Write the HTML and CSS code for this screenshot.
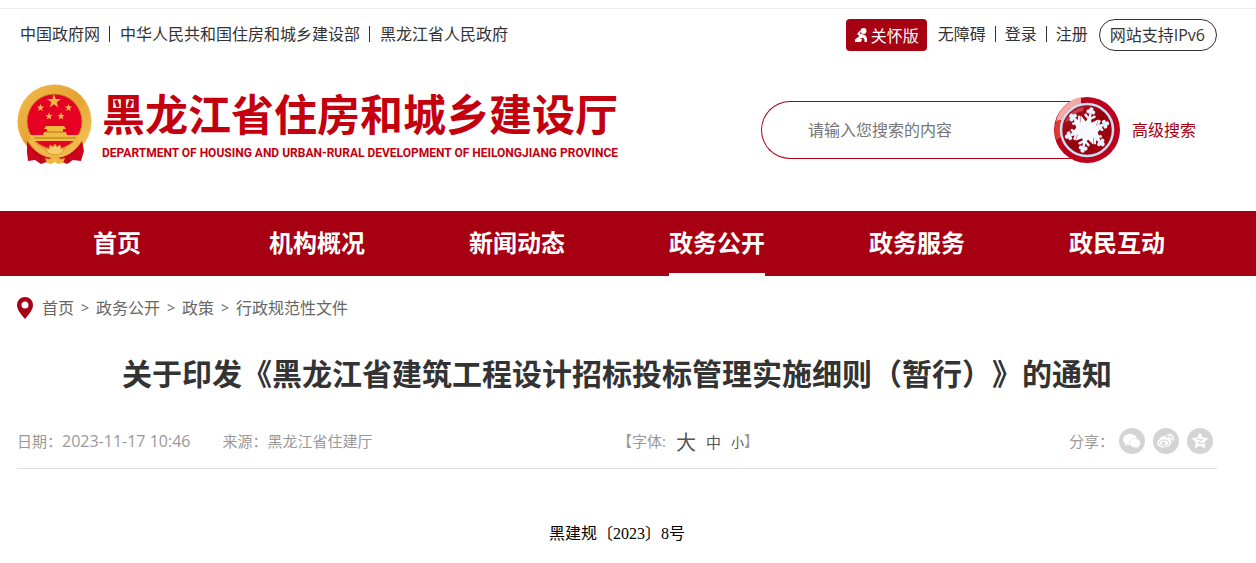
FILE: index.html
```html
<!DOCTYPE html>
<html lang="zh-CN">
<head>
    <meta charset="UTF-8">
    <meta name="viewport" content="width=device-width, initial-scale=1.0">
    <title>黑龙江省住房和城乡建设厅</title>
    <link rel="stylesheet" href="styles.css">
</head>
<body>
    <div class="strip"></div>

    <div class="topbar wrap">
        <div class="links sites">
            <a href="#">中国政府网</a>
            <a href="#">中华人民共和国住房和城乡建设部</a>
            <a href="#">黑龙江省人民政府</a>
        </div>
        <div class="tools">
            <button class="care" type="button">
                <svg width="14" height="16" viewBox="0 0 14 16" fill="#fff" aria-hidden="true">
                    <circle cx="9.500" cy="4" r="3"/>
                    <path d="M6 3.500 3 7l2.500 2L1 12.500V15h5.500l2-2.500L6 12l3-1.500 1.500 2V15H13v-4l-2-3-4-1-1.500-.8L7 4.500z"/>
                </svg>
                关怀版
            </button>
            <div class="links">
                <a href="#">无障碍</a>
                <a href="#">登录</a>
                <a href="#">注册</a>
            </div>
            <a class="ipv6" href="#">网站支持IPv6</a>
        </div>
    </div>

    <header class="header wrap">
        <a class="logo" href="#">
            <svg class="emblem" width="76" height="82" viewBox="0 0 76 82" aria-hidden="true">
                <defs>
                    <linearGradient id="gold" x1="0" y1="0" x2="1" y2="1">
                        <stop offset="0" stop-color="#f3bd4e"/>
                        <stop offset=".5" stop-color="#e5a432"/>
                        <stop offset="1" stop-color="#f8ce68"/>
                    </linearGradient>
                </defs>
                <circle cx="37.500" cy="37.500" r="37" fill="url(#gold)"/>
                <circle cx="37.500" cy="37.500" r="32.500" fill="none" stroke="#d89427" stroke-width="5" stroke-dasharray="1 2" opacity=".2"/>
                <circle cx="37.500" cy="37.500" r="27.500" fill="#e60023" stroke="#c98a24"/>
                <g fill="#f1bb43">
                    <path d="m37 10 1.700 5h5.300l-4.300 3.200 1.600 5.300-4.300-3.200-4.300 3.200 1.600-5.300-4.300-3.200h5.300z"/>
                    <path d="m23.500 20 1 2.500h2.700l-2.200 1.700.8 2.800-2.300-1.600-2.300 1.600.8-2.800-2.200-1.700h2.700z"/>
                    <path d="m51.500 20 1 2.500h2.700l-2.200 1.700.8 2.800-2.300-1.600-2.300 1.600.8-2.800-2.200-1.700h2.700z"/>
                    <path d="m32 28.500 1 2.500h2.700l-2.200 1.700.8 2.800-2.300-1.600-2.300 1.600.8-2.800-2.200-1.700h2.700z"/>
                    <path d="m44 28.500 1 2.500h2.700l-2.200 1.700.8 2.800-2.300-1.600-2.300 1.600.8-2.800-2.200-1.700h2.700z"/>
                    <path d="M29 42h18l2 3H27zM30 45h16v3h3l1 3h12l-3 6H16l-4-6h14l1-3h3z"/>
                </g>
                <path d="M29 48h19M17 54h42" stroke="#b87915"/>
                <path d="M10 57q11 17 27.500 17T65 57l2 10-3 10-8-1-6 4-12-5-14 5-6-4-7 1-1-8z" fill="#ce061c"/>
                <path d="M13 55q9 15 25 16 15-1 25-16" fill="none" stroke="#f0b94a" stroke-width="4"/>
                <path d="m31 69-3-5 4 1 1-4 3 2 2-3 2 3 3-2 1 4 4-1-3 5q-7 4-14 0z" fill="#f6cb68" stroke="#d4962a"/>
                <path d="m28 74 4 1 6-3 6 3 4-1-2 5-5 1-3-2-4 2-4-1z" fill="#edb63f"/>
                <path d="m14 65 10 8-1 6M61 65l-10 8 1 6" fill="none" stroke="#a90015"/>
            </svg>
            <span class="logo-text">
                <span class="logo-cn">黑龙江省住房和城乡建设厅</span>
                <span class="logo-en">DEPARTMENT OF HOUSING AND URBAN-RURAL DEVELOPMENT OF HEILONGJIANG PROVINCE</span>
            </span>
        </a>
        <form class="search">
            <input type="text" placeholder="请输入您搜索的内容" aria-label="请输入您搜索的内容">
            <button type="button" aria-label="搜索">
                <svg width="66" height="68" viewBox="0 0 66 68" aria-hidden="true">
                    <defs>
                        <linearGradient id="disc" x1="0" y1="0" x2="1" y2="1">
                            <stop offset="0" stop-color="#b51625"/>
                            <stop offset=".5" stop-color="#91000b"/>
                            <stop offset="1" stop-color="#a80010"/>
                        </linearGradient>
                        <g id="arm">
                            <path d="M33 34V15M33 23l-4-3M33 23l4-3" fill="none" stroke="#e5f2ff" stroke-width="2.500" stroke-linecap="round"/>
                            <circle cx="33" cy="13" r="2.200"/>
                            <circle cx="30.500" cy="15.500" r="2"/>
                            <circle cx="35.500" cy="15.500" r="2"/>
                            <circle cx="28.500" cy="19.500" r="1.300"/>
                            <circle cx="37.500" cy="19.500" r="1.300"/>
                        </g>
                    </defs>
                    <circle cx="33" cy="34" r="33" fill="#bd001b"/>
                    <path d="M2 25A33 33 0 0 1 27 1v7A27 27 0 0 0 8 24z" fill="#f2aaa2"/>
                    <path d="M2 25A33 33 0 0 0 2 44l7-4a27 27 0 0 1-1-16z" fill="#dc3b30"/>
                    <circle cx="33" cy="34" r="26" fill="url(#disc)" stroke="#c9dff7" stroke-width="2.500"/>
                    <path d="M11 26Q18 12 30 11l-1 4q-9 1-14 10z" fill="#d7686c" opacity=".6"/>
                    <g fill="#e5f2ff" transform="rotate(12 33 34)">
                        <use href="#arm"/>
                        <use href="#arm" transform="rotate(60 33 34)"/>
                        <use href="#arm" transform="rotate(120 33 34)"/>
                        <use href="#arm" transform="rotate(180 33 34)"/>
                        <use href="#arm" transform="rotate(240 33 34)"/>
                        <use href="#arm" transform="rotate(300 33 34)"/>
                        <path d="m33 19 3 7 6-5-1 7 7-1-4 7 4 7-7-1 1 7-6-4-3 6-3-6-6 4 1-7-7 1 4-7-4-7 7 1-1-7 6 5z" fill="#f7fbff"/>
                    </g>
                </svg>
            </button>
            <a href="#">高级搜索</a>
        </form>
    </header>

    <nav class="nav">
        <div class="nav-list wrap">
            <a href="#">首页</a>
            <a href="#">机构概况</a>
            <a href="#">新闻动态</a>
            <a class="active" href="#">政务公开</a>
            <a href="#">政务服务</a>
            <a href="#">政民互动</a>
        </div>
    </nav>

    <main class="wrap">
        <div class="crumbs">
            <svg width="16" height="22" viewBox="0 0 16 22" aria-hidden="true">
                <path d="M8 0a8 8 0 0 0-8 8c0 5 4 9 8 14 4-5 8-9 8-14a8 8 0 0 0-8-8zm0 4.500a3.500 3.500 0 1 1 0 7 3.500 3.500 0 0 1 0-7z" fill="#a60012"/>
            </svg>
            <a href="#">首页</a>
            <span>&gt;</span>
            <a href="#">政务公开</a>
            <span>&gt;</span>
            <a href="#">政策</a>
            <span>&gt;</span>
            <a href="#">行政规范性文件</a>
        </div>

        <h1>关于印发《黑龙江省建筑工程设计招标投标管理实施细则（暂行）》的通知</h1>

        <div class="meta">
            <div class="info">
                <span>日期：<time>2023-11-17 10:46</time></span>
                <span>来源：黑龙江省住建厅</span>
            </div>
            <div class="sizes">
                <span>【字体:</span>
                <button class="big" type="button">大</button>
                <button class="mid" type="button">中</button>
                <button class="small" type="button">小</button>
                <span>】</span>
            </div>
            <div class="share">
                <span>分享：</span>
                <a href="#" aria-label="微信">
                    <svg width="26" height="26" viewBox="0 0 26 26">
                        <circle cx="13" cy="13" r="13" fill="#d4d4d4"/>
                        <path d="M11 6c-4 0-7 2.400-7 5.500 0 1.800 1 3.200 2.500 4.200L6 18l2.700-1.300q1.500.4 3 .3c-1-4 2-7 6.200-7C17 7.500 14.300 6 11 6z" fill="#fff"/>
                        <path d="M16 10.500c-3.300 0-5.500 2-5.500 4.500s2.400 4.500 5.500 4.500l1.700-.2L20 20.500l-.5-2c1.300-.9 2-2.100 2-3.500 0-2.500-2.400-4.500-5.500-4.500z" fill="#fff" stroke="#d4d4d4" stroke-width=".4"/>
                    </svg>
                </a>
                <a href="#" aria-label="微博">
                    <svg width="26" height="26" viewBox="0 0 26 26">
                        <circle cx="13" cy="13" r="13" fill="#d4d4d4"/>
                        <path d="M11 8c1.600-.5 2.500.4 2 2 2.400-.8 4.300-.2 3.600 1.800 1.500.4 2 1.500 1.600 3-.7 2.800-4 4.700-7.700 4.700-3.600 0-6.300-1.700-6.300-4.300C4.200 12.500 7.700 8.800 11 8z" fill="#fff"/>
                        <ellipse cx="11" cy="15" rx="4.600" ry="3" fill="none" stroke="#d4d4d4"/>
                        <circle cx="10.500" cy="15.300" r="1.600" fill="#d4d4d4"/>
                        <path d="M14.500 7c4-1.200 6.500 1.500 5.500 5M15.500 9.500q2.700-.4 2.200 2" fill="none" stroke="#fff" stroke-width="1.500" stroke-linecap="round"/>
                    </svg>
                </a>
                <a href="#" aria-label="QQ空间">
                    <svg width="26" height="26" viewBox="0 0 26 26">
                        <circle cx="13" cy="13" r="13" fill="#d4d4d4"/>
                        <path d="m13 5 2.300 5 5.400.6-4 3.800 1.100 5.400-4.800-2.700-4.800 2.700 1.100-5.400-4-3.800 5.400-.6z" fill="#fff" stroke="#fff" stroke-linejoin="round"/>
                        <path d="M10 11.500q3-.8 5.500 0l-4.500 3.700q3 .8 6 0" fill="none" stroke="#d4d4d4"/>
                    </svg>
                </a>
            </div>
        </div>

        <p class="doc-no">黑建规〔2023〕8号</p>
    </main>
</body>
</html>
```

FILE: styles.css
```css
* {
    box-sizing: border-box;
}

body {
    margin: 0;
    background-color: #fff;
    color: #333;
    font-family: "Open Sans", "Noto Sans CJK SC", sans-serif;
    font-size: 16px;
    line-height: 32px;
    text-spacing-trim: space-all;
}

a {
    color: inherit;
    text-decoration: none;
}

button {
    padding: 0;
    border: none;
    background: none;
    color: inherit;
    font-family: inherit;
    cursor: pointer;
}

svg {
    display: block;
    flex: none;
}

.wrap {
    margin: 0 39px 0 17px;
}

.strip {
    height: 9px;
    border-bottom: 1px solid #eee;
}

/* 顶部链接 */
.topbar {
    display: flex;
    justify-content: space-between;
    padding: 10px 0 0 3px;
    line-height: 30px;
    white-space: nowrap;
}

.links {
    display: flex;
}

.links a + a::before {
    content: "";
    display: inline-block;
    width: 1px;
    height: 16px;
    margin: 0 9px;
    background-color: #333;
    vertical-align: -2px;
}

.sites a + a::before {
    margin-right: 10px;
}

.tools {
    display: flex;
    gap: 11px;
}

.care {
    display: flex;
    align-items: center;
    gap: 3px;
    height: 32px;
    padding: 0 8px;
    border-radius: 4px;
    background-color: #a60012;
    color: #fff;
    font-size: 16px;
}

.ipv6 {
    padding: 0 11px 0 10px;
    border: 1px solid #333;
    border-radius: 16px;
}

/* 标志和搜索 */
.header {
    display: flex;
    justify-content: space-between;
    align-items: flex-start;
    height: 160px;
    padding-top: 33px;
}

.logo {
    display: flex;
    gap: 9px;
    color: #c4000f;
    font-weight: bold;
    white-space: nowrap;
}

.logo-text {
    display: flex;
    flex-direction: column;
}

.logo-cn {
    font-size: 43px;
    line-height: 62px;
}

.logo-en {
    font-family: Roboto, sans-serif;
    font-size: 12px;
    line-height: 14px;
}

.search {
    display: flex;
    align-items: center;
    padding: 12px 21px 0 0;
    color: #a60012;
}

.search input {
    width: 326px;
    height: 58px;
    padding: 0 46px;
    border: 1px solid #a60012;
    border-right: none;
    border-radius: 29px 0 0 29px;
    font-family: inherit;
    font-size: 16px;
    outline: none;
}

.search input::placeholder {
    color: #757575;
}

.search button {
    margin: 0 12px 0 -33px;
}

/* 导航 */
.nav {
    background-color: #a60012;
}

.nav-list {
    display: grid;
    grid-template-columns: repeat(6, 1fr);
    justify-items: center;
}

.nav a {
    height: 65px;
    color: #fff;
    font-size: 24px;
    font-weight: bold;
    line-height: 63px;
}

.nav .active {
    border-bottom: 3px solid #fff;
}

/* 正文 */
.crumbs {
    display: flex;
    align-items: center;
    padding-top: 16px;
    color: #666;
}

.crumbs svg {
    margin-right: 9px;
}

.crumbs span {
    margin: 0 7px;
    font-size: 14px;
}

h1 {
    margin: 26px 0 0;
    font-size: 30px;
    line-height: 48px;
    text-align: center;
}

.meta {
    display: grid;
    grid-template-columns: 2fr 1fr 1fr;
    align-items: center;
    height: 71px;
    padding-top: 16px;
    border-bottom: 1px solid #e0e0e0;
    color: #999;
    font-size: 15px;
}

.info {
    display: flex;
    gap: 32px;
}

.info time {
    font-size: 16px;
}

.sizes {
    display: flex;
    align-items: center;
}

.sizes button {
    margin-left: 10px;
    color: #555;
}

.big {
    font-size: 20px;
}

.mid {
    font-size: 15px;
}

.small {
    font-size: 13px;
}

.share {
    display: flex;
    justify-content: flex-end;
    gap: 8px;
    padding-right: 4px;
}

.share span {
    margin-right: -3px;
}

.share a {
    align-self: center;
}

.doc-no {
    margin: 49px 0 0;
    color: #000;
    font-family: "Liberation Serif", "Noto Sans CJK SC", serif;
    text-align: center;
}
```
